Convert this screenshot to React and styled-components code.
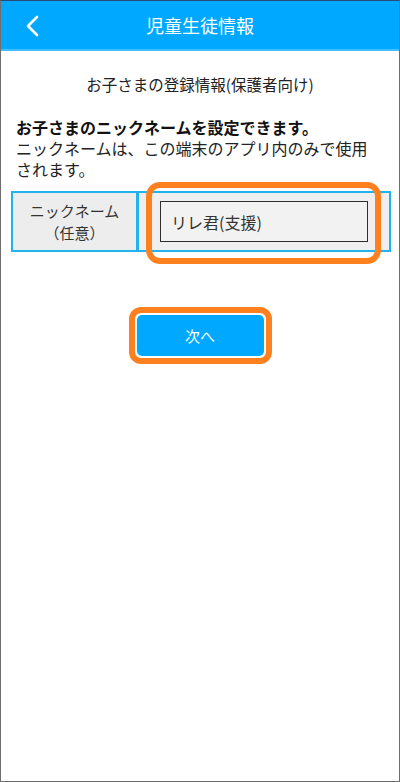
import React from 'react';
import styled, { createGlobalStyle } from 'styled-components';

const GlobalStyle = createGlobalStyle`
  html, body {
    margin: 0;
    padding: 0;
    background: #ffffff;
  }
  body {
    font-family: "Noto Sans CJK JP", "Noto Sans", sans-serif;
    color: #222222;
  }
  * {
    box-sizing: border-box;
  }
`;

const Frame = styled.div`
  width: 400px;
  height: 782px;
  border: 1px solid #6e6e6e;
  border-top-color: #2a4a7a;
  display: flex;
  flex-direction: column;
  background: #ffffff;
`;

const Header = styled.header`
  height: 50px;
  background: #00a9ff;
  border-bottom: 2px solid #3fbfff;
  display: flex;
  align-items: center;
  justify-content: center;
  position: relative;
`;

const BackButton = styled.button`
  position: absolute;
  left: 18px;
  top: 12px;
  width: 26px;
  height: 26px;
  padding: 0;
  border: none;
  background: transparent;
  display: flex;
  align-items: center;
  justify-content: center;
`;

const Title = styled.h1`
  margin: 0;
  font-size: 18px;
  font-weight: 400;
  color: #ffffff;
`;

const Body = styled.main`
  padding: 22px 10px 0 10px;
  display: flex;
  flex-direction: column;
`;

const Subtitle = styled.p`
  margin: 0;
  text-align: center;
  font-size: 15.5px;
  line-height: 22px;
  color: #222222;
`;

const Lead = styled.p`
  margin: 21px 0 0 5px;
  font-size: 16px;
  line-height: 22px;
  font-weight: 700;
  color: #111111;
`;

const Desc = styled.p`
  margin: 0 0 0 5px;
  font-size: 16px;
  line-height: 21px;
  color: #222222;
`;

const Table = styled.div`
  margin-top: 11px;
  display: grid;
  grid-template-columns: 127px 1fr;
  height: 61px;
  width: 380px;
`;

const Cell = styled.div`
  border: 2px solid #22b2ee;
  background: ${p => (p.$head ? '#ededed' : '#efefef')};
  display: flex;
  align-items: center;
  justify-content: center;
  position: relative;
  ${p => (p.$head ? '' : 'border-left-width: 1px;')}
`;

const HeadText = styled.div`
  text-align: center;
  font-size: 15px;
  line-height: 22px;
  color: #333333;
`;

const Field = styled.div`
  width: 208px;
  height: 41px;
  border: 1.5px solid #2e2e2e;
  background: #f2f2f2;
  display: flex;
  align-items: center;
  padding-left: 10px;
  font-size: 16px;
  color: #333333;
`;

const Ring = styled.div`
  position: absolute;
  left: 7px;
  right: 8px;
  top: -11px;
  bottom: -14px;
  border: 6px solid #ff801f;
  border-radius: 14px;
  pointer-events: none;
`;

const ButtonRow = styled.div`
  display: flex;
  justify-content: center;
  margin-top: 55px;
`;

const ButtonRing = styled.div`
  border: 6px solid #ff801f;
  border-radius: 12px;
  padding: 2px;
  background: #ffffff;
`;

const NextButton = styled.button`
  width: 127px;
  height: 41px;
  border: none;
  border-radius: 5px;
  background: #00a9ff;
  color: #ffffff;
  font-family: inherit;
  font-size: 15px;
  display: block;
`;

export default function App() {
  return (
    <>
      <GlobalStyle />
      <Frame>
        <Header>
          <BackButton aria-label="戻る">
            <svg width="16" height="22" viewBox="0 0 16 22">
              <path d="M13 2 L4 11 L13 20" fill="none" stroke="#ffffff" strokeWidth="2.6" strokeLinecap="round" strokeLinejoin="round" />
            </svg>
          </BackButton>
          <Title>児童生徒情報</Title>
        </Header>
        <Body>
          <Subtitle>お子さまの登録情報(保護者向け)</Subtitle>
          <Lead>お子さまのニックネームを設定できます。</Lead>
          <Desc>
            ニックネームは、この端末のアプリ内のみで使用
            <br />
            されます。
          </Desc>
          <Table>
            <Cell $head>
              <HeadText>
                ニックネーム
                <br />
                （任意）
              </HeadText>
            </Cell>
            <Cell>
              <Field>リレ君(支援)</Field>
              <Ring />
            </Cell>
          </Table>
          <ButtonRow>
            <ButtonRing>
              <NextButton>次へ</NextButton>
            </ButtonRing>
          </ButtonRow>
        </Body>
      </Frame>
    </>
  );
}
